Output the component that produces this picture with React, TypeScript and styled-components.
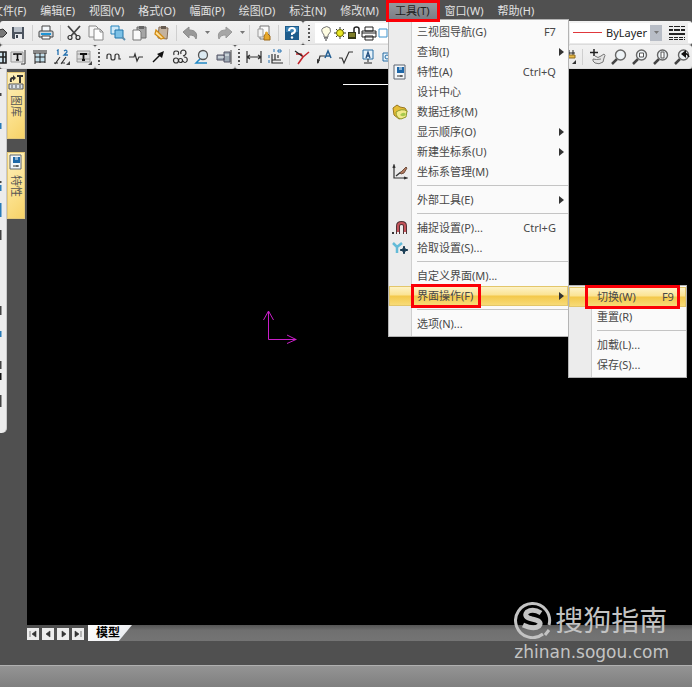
import React from "react";
import styled, { createGlobalStyle, css } from "styled-components";

const GlobalStyle = createGlobalStyle`
  * { box-sizing: border-box; }
  body { margin: 0; background: #505050; }
  button, select, a { font: inherit; color: inherit; }
  ul { list-style: none; margin: 0; padding: 0; }
`;

const Shell = styled.div`
  position: relative;
  display: flex;
  flex-direction: column;
  min-height: 100vh;
  overflow: hidden;
  background: #505050;
  color: #444;
  font: 11px/20px "Noto Sans", "Noto Sans CJK SC", sans-serif;
`;

const MenuBar = styled.nav`
  position: relative;
  z-index: 2;
  display: flex;
  height: 21px;
  margin-left: -15px;
  color: #e2e2e2;
  background: #505050;
`;

const redFrame = css`
  &::after {
    content: "";
    position: absolute;
    inset: -2px 0;
    border: 3px solid #fb0007;
    pointer-events: none;
    z-index: 5;
  }
`;

const MenuAnchor = styled.div<{ $marked?: boolean }>`
  position: relative;
  flex: none;
  ${(p) => p.$marked && redFrame}
  &::after { inset: 0 -2px -1px 0; }
`;

const MenuTitle = styled.button<{ $open?: boolean }>`
  height: 21px;
  padding: 0 7px;
  border: 0;
  white-space: nowrap;
  line-height: 20px;
  background: ${(p) => (p.$open ? "linear-gradient(#9b9da1, #777b83)" : "none")};
  color: ${(p) => (p.$open ? "#202020" : "inherit")};
  ${(p) => p.$open && "padding: 0 8px 0 9px;"}
`;

const gutter = css`
  background: linear-gradient(to right, #ececec 22px, #cfcfcf 22px, #cfcfcf 23px, #fafafa 23px);
`;

const Popup = styled.ul<{ $sub?: boolean }>`
  position: absolute;
  top: ${(p) => (p.$sub ? "-1px" : "19px")};
  left: ${(p) => (p.$sub ? "100%" : "2px")};
  width: ${(p) => (p.$sub ? "119px" : "181px")};
  padding: ${(p) => (p.$sub ? "1px 0 2px" : "2px 0")};
  border: 1px solid #b4b4b4;
  color: #484848;
  z-index: 3;
  ${gutter}
`;

const PopupItem = styled.li<{ $active?: boolean }>`
  position: relative;
  height: 20px;
  ${(p) =>
    p.$active &&
    css`
      background: linear-gradient(#fdf4cd, #fbe392 45%, #f3c84a 50%, #f8dd7c);
      box-shadow: inset 0 0 0 1px #e3c66a;
    `}
`;

const PopupButton = styled.button`
  display: grid;
  grid-template-columns: 22px 1fr auto 12px;
  align-items: center;
  width: 100%;
  height: 20px;
  padding: 0;
  border: 0;
  background: none;
  text-align: left;
  white-space: nowrap;
  line-height: 20px;
  svg { justify-self: center; }
`;

const PopupLabel = styled.span<{ $marked?: boolean }>`
  position: relative;
  justify-self: start;
  padding-left: 6px;
  padding-right: 8px;
  ${(p) => p.$marked && redFrame}
`;

const SubMarked = styled.span`
  position: relative;
  grid-column: 2 / 4;
  display: flex;
  justify-content: space-between;
  margin-left: -6px;
  margin-right: -6px;
  padding: 0 6px 0 12px;
  ${redFrame}
`;

const PopupRule = styled.li`
  height: 8px;
  margin-left: 28px;
  background: linear-gradient(transparent 3px, #c4c4c4 3px, #c4c4c4 4px, transparent 4px);
`;

const ToolRow = styled.div`
  display: flex;
  height: 24px;
`;

const ToolGroup = styled.div<{ $grow?: boolean }>`
  display: flex;
  align-items: center;
  flex: ${(p) => (p.$grow ? "1" : "none")};
  min-width: 0;
  border-radius: 3px;
  border-bottom: 1px solid #dcdcdc;
  background: linear-gradient(#f2f2f2, #e9e9e9);
`;

const ToolButton = styled.button<{ $w?: number }>`
  display: flex;
  justify-content: ${(p) => (p.$w && p.$w < 16 ? "flex-end" : "center")};
  flex: none;
  width: ${(p) => p.$w ?? 22}px;
  padding: 0;
  border: 0;
  background: none;
  overflow: hidden;
  svg { flex: none; }
`;

const Divider = styled.span<{ $w?: number }>`
  flex: none;
  width: ${(p) => p.$w ?? 6}px;
  height: 16px;
  background: linear-gradient(#cfcfcf, #cfcfcf) center / 1px 100% no-repeat;
`;

const Gap = styled.span`
  flex: none;
  width: 4px;
`;

const Grip = styled.span<{ $w?: number }>`
  flex: none;
  width: ${(p) => p.$w ?? 8}px;
  height: 16px;
  background: radial-gradient(#555 1px, transparent 1px) center / 4px 4px repeat-y;
`;

const LayerField = styled.button`
  display: flex;
  align-items: center;
  flex: 1;
  height: 20px;
  padding: 0 4px;
  gap: 1px;
  border: 0;
  background: #fff;
  color: #222;
  overflow: hidden;
  white-space: nowrap;
  svg { flex: none; }
`;

const LineField = styled.label`
  display: flex;
  align-items: center;
  gap: 4px;
  width: 80px;
  height: 20px;
  padding-left: 3px;
  margin-left: 4px;
  background: #fff;
  color: #222;
  svg { flex: none; }
`;

const LineSelect = styled.select`
  appearance: none;
  width: 44px;
  padding: 0;
  border: 0;
  background: none;
  line-height: 18px;
`;

const DropCap = styled.span`
  display: grid;
  place-items: center;
  width: 12px;
  height: 16px;
  margin-right: 5px;
  background: #b8bdc6;
`;

const FieldEdge = styled.span`
  width: 4px;
  height: 20px;
  margin-left: 2px;
  background: #fff;
`;

const Workspace = styled.main`
  display: flex;
  flex: 1;
`;

const EdgeBar = styled.div`
  flex: none;
  width: 7px;
  height: 364px;
  border-radius: 0 0 5px 0;
  border-right: 1px solid #c9c9c9;
  background: #ececec;
`;

const Dock = styled.div`
  display: flex;
  flex-direction: column;
  flex: none;
  gap: 13px;
  width: 20px;
  padding-top: 3px;
  padding-right: 2px;
`;

const DockTab = styled.button`
  display: flex;
  flex-direction: column;
  align-items: center;
  gap: 5px;
  height: 67px;
  padding: 1px 0;
  border: 1px solid #e4c877;
  background: linear-gradient(135deg, #fdf0bd, #fbe08a 60%, #f7d268);
  span {
    writing-mode: vertical-rl;
    text-orientation: sideways;
    line-height: 16px;
    color: #555;
  }
`;

const Canvas = styled.svg`
  flex: 1;
  min-width: 0;
  display: block;
  background: #000;
`;

const SheetBar = styled.div`
  display: flex;
  align-items: center;
  height: 16px;
  padding-left: 27px;
`;

const SheetStep = styled.button`
  display: grid;
  place-items: center;
  width: 12px;
  height: 12px;
  margin-right: 3px;
  margin-top: 2px;
  padding: 0;
  border: 0;
  background: #ededed;
`;

const SheetTrack = styled.div`
  flex: 1;
  display: flex;
  margin-left: 1px;
  background: linear-gradient(#555, #707070 35%, #747474);
`;

const SheetTab = styled.button`
  width: 44px;
  height: 16px;
  padding: 0 0 0 8px;
  border: 0;
  clip-path: polygon(0 0, 100% 0, 70% 100%, 0 100%);
  background: linear-gradient(135deg, #fff, #e6e8ec);
  color: #000;
  font-size: 12px;
  font-weight: 700;
  line-height: 16px;
  text-align: left;
  white-space: nowrap;
`;

const StatusBar = styled.footer`
  height: 22px;
  margin-top: 24px;
  border-top: 1px solid #b0b0b0;
  background: linear-gradient(#949494, #7f7f7f);
`;

const Watermark = styled.a`
  position: absolute;
  right: 23px;
  bottom: 24px;
  display: grid;
  grid-template-columns: 38px auto;
  column-gap: 3px;
  align-items: center;
  color: #c3c3c3;
  text-decoration: none;
`;

const WatermarkName = styled.span`
  font-size: 28px;
  line-height: 38px;
  font-weight: 400;
`;

const WatermarkHost = styled.span`
  grid-column: 1 / 3;
  padding-top: 2px;
  font: 17px/22px "DejaVu Sans", sans-serif;
`;

type Art = Record<string, React.ReactNode>;

const ink = { fill: "none", stroke: "#333", strokeWidth: 1.2 } as const;

const art: Art = {
  open: <path d="M8 5l4-1 4 4-4 4H8z" fill="#777" stroke="#333" />,
  save: (
    <>
      <path d="M2 2h12v12H3l-1-1z" fill="#4c545f" />
      <path d="M4 2h8v5H4z" fill="#b9c0c9" />
      <path d="M5 9h7v5H5z" fill="#e9ebee" />
      <path d="M6 10h2v3H6z" fill="#3a424d" />
    </>
  ),
  print: (
    <>
      <path d="M4 1h8v6H4z" fill="#f4f8fb" stroke="#444" />
      <path d="M1 7q0-1 1-1h12q1 0 1 1v5H1z" fill="#cfd8df" stroke="#444" />
      <path d="M3 8h10v2H3z" fill="#1f94d4" />
      <path d="M4 11h8v3H4z" fill="#fff" stroke="#444" />
    </>
  ),
  cut: (
    <>
      <path d="M2 1l9 10M14 1L5 11" stroke="#444" strokeWidth="1.8" />
      <circle cx="4" cy="12.5" r="2" {...ink} />
      <circle cx="12" cy="12.5" r="2" {...ink} />
    </>
  ),
  copy: (
    <>
      <path d="M1 1h7l2 2v9H1z" fill="#f7f7f7" stroke="#888" />
      <path d="M6 4h6l3 3v8H6z" fill="#fdfdfd" stroke="#888" />
      <path d="M12 4v3h3" fill="none" stroke="#888" />
    </>
  ),
  copyBase: (
    <>
      <path d="M1 1h8v8H1z" fill="#cfe9f8" stroke="#2584bd" />
      <path d="M5 5h8v8H5z" fill="#7cc1e6" stroke="#1f75aa" />
      <path d="M12 12l3 3" stroke="#5e8fae" strokeWidth="2" />
    </>
  ),
  paste: (
    <>
      <path d="M5 2h9v11H5z" fill="#a5a5a5" stroke="#6c6c6c" />
      <path d="M7 1h5v3H7z" fill="#666" />
      <path d="M1 5h6l2 2v8H1z" fill="#fafafa" stroke="#777" />
    </>
  ),
  pasteBrush: (
    <>
      <path d="M5 2l9 1-1 11-9-1z" fill="#c3b29f" stroke="#806a58" />
      <path d="M7 1h5v3H7z" fill="#665b50" />
      <path d="M2 5l8 8-3 1-6-5z" fill="#ffe19a" stroke="#d18b14" strokeWidth="1.3" />
    </>
  ),
  undo: <path d="M1 7l6-5v3c6 0 9 3 7 9-1-3-3-4-7-4v3z" fill="#999" stroke="#8c8c8c" />,
  redo: <path d="M15 7L9 2v3C3 5 0 8 2 14c1-3 3-4 7-4v3z" fill="#a6a6a6" stroke="#999" />,
  page: (
    <>
      <path d="M4 1h9v13H4z" fill="#fafafa" stroke="#777" />
      <path d="M2 4h5v8H2z" fill="#f3f3f3" stroke="#999" />
      <path d="M8 15v-4l2-3h1l3 3v4z" fill="#e6a72b" stroke="#9c681b" />
      <circle cx="10.500" cy="8" r="1.5" fill="#e6a72b" />
    </>
  ),
  help: (
    <>
      <path d="M1 1h14v14H1z" fill="#1d5c8c" />
      <path d="M2 2h12v5H2z" fill="#3c83b5" />
      <path d="M5 6q0-3 3-3t3 2.500-3 3V10" fill="none" stroke="#fff" strokeWidth="2" />
      <circle cx="8" cy="12.5" r="1.2" fill="#fff" />
    </>
  ),
  bulb: (
    <>
      <path d="M5 10Q1 5 4 3q4-3 7 0 2 4-2 7v2H5z" fill="#fffde2" stroke="#777" />
      <path d="M5 13h4M6 15h2" stroke="#333" />
    </>
  ),
  sun: (
    <>
      <path d="M6 2v12M0 8h12M2 4l8 8M10 4l-8 8" stroke="#333" />
      <circle cx="6" cy="8" r="3.5" fill="#e9e623" stroke="#6b6b00" />
    </>
  ),
  lock: (
    <>
      <path d="M0 7h8v7H0z" fill="#333614" />
      <path d="M1 9h6M1 11h6" stroke="#c8c43a" />
      <path d="M6 7V4q0-2 2.500-2T11 4v5" fill="none" stroke="#222" strokeWidth="1.5" />
    </>
  ),
  plot: (
    <>
      <path d="M4 2h8v4H4zM1 6h14v6H1zM4 11h8v4H4z" fill="#fafafa" stroke="#222" />
      <path d="M1 8h14" stroke="#222" />
    </>
  ),
  swatch: <path d="M1 4h8v8H1z" fill="#fff" stroke="#3c94cf" />,
  frag: <path d="M6 3h9v11H6zM6 8h9M12 3v11" fill="#cfe4ee" stroke="#222" strokeWidth="1.6" />,
  textFrame: (
    <>
      <path d="M1 3h12v10H1z" fill="#e2e2e2" stroke="#999" />
      <path d="M4 6V5h7v1M7.500 5v6M6 11h3" stroke="#111" strokeWidth="1.6" fill="none" />
      <path d="M15 1v14h-4" stroke="#333" fill="none" />
    </>
  ),
  table: (
    <>
      <path d="M4 5h9v8H4z" fill="#c3dfeb" />
      <path d="M1 2h14M1 4h14M3 4v11M8 4v10M13 4v10M3 8h10M3 13h10" stroke="#222" fill="none" />
    </>
  ),
  ordinal: (
    <>
      <path d="M3 2l1-1v5M10 2q3-2 3 1l-3 3h4" fill="none" stroke="#2471b0" strokeWidth="1.3" />
      <path d="M1 15l5-7M7 15l5-7M0 14h4M7 14h4" {...ink} />
      <path d="M16 12v4h-4z" fill="#444" />
    </>
  ),
  textGrid: (
    <>
      <path d="M1 2h13v11H1zM1 5h13M1 10h13" fill="#ddd" stroke="#999" />
      <path d="M4 5h7M7.500 5v6M6 11h3" stroke="#111" strokeWidth="1.8" />
      <path d="M16 12v4h-4z" fill="#444" />
    </>
  ),
  wave: <path d="M1 10V7q0-2 2-2t2 2v2q0 2 2 2t2-2V7q0-2 2-2t2 2v3h2" {...ink} />,
  zigzag: <path d="M1 8h5l1-3 2 7 2-4h4" {...ink} />,
  arrow: (
    <>
      <path d="M3 13l7-7" stroke="#111" strokeWidth="1.4" />
      <path d="M14 2L12 9 7 5z" fill="#111" />
    </>
  ),
  cloud: (
    <>
      <path d="M2 6q-1-4 2-4 4 0 2 4M9 5q-1-3 2-4 3 0 3 3 0 2-3 3" {...ink} />
      <path d="M12 8q4 0 3 4-2 3-4 0" {...ink} />
      <circle cx="4" cy="11.5" r="2.500" {...ink} />
      <circle cx="8.500" cy="11.5" r="2" {...ink} />
    </>
  ),
  lens: (
    <>
      <circle cx="9" cy="6" r="4.5" fill="#dceaf2" stroke="#555" strokeWidth="1.3" />
      <path d="M6 10l-4 4h11" fill="none" stroke="#2389c5" strokeWidth="1.5" />
    </>
  ),
  screw: (
    <>
      <path d="M8 3h6v10H8zM1 6h7v5H1z" fill="#9eaab5" stroke="#556" />
      <path d="M9 6h4M2 8h6" stroke="#f6f9fb" />
      <path d="M15 1v14" stroke="#444" />
    </>
  ),
  dim: <path d="M1 2v12M15 2v12M1 8h14M4 6L1 8l3 2M12 6l3 2-3 2" {...ink} />,
  ordinate: (
    <>
      <path d="M4 5v9h11M7 5v6h6M10 6v3M4 11h3" {...ink} />
      <path d="M6 0v3M10 1h3v2h-3zM1 6v3M1 11v3" fill="none" stroke="#2471b0" />
    </>
  ),
  chamfer: (
    <>
      <path d="M2 5h5l2 3-5 7M9 8l6-5" fill="none" stroke="#c3262c" strokeWidth="1.6" />
      <path d="M1 2l7 5" stroke="#222" strokeWidth="1.2" />
    </>
  ),
  leader: (
    <>
      <path d="M2 14l2-7h5" {...ink} />
      <path d="M1 15v-5l3 1z" fill="#333" />
      <path d="M9 9l3-7 3 7M10 7h4" fill="none" stroke="#245e92" strokeWidth="1.5" />
    </>
  ),
  rough: <path d="M1 9h3l2 5 5-11h4" {...ink} />,
  datum: (
    <>
      <path d="M3 1h10v9H3z" fill="#e6f2fa" stroke="#276da3" />
      <path d="M6 9l2-6 2 6M6 7h4" fill="none" stroke="#234f80" strokeWidth="1.3" />
      <path d="M8 10v3M4 14h8" stroke="#222" />
    </>
  ),
  tolerance: (
    <>
      <path d="M1 4h14v8H1z" fill="#e6f2fa" stroke="#276da3" />
      <circle cx="5" cy="8" r="2" fill="none" stroke="#276da3" />
    </>
  ),
  edit: (
    <>
      <path d="M8 1v5M12 1v5M7 4h7" stroke="#222" />
      <path d="M7 6h7v3H7z" fill="#e8ba43" stroke="#8c6820" />
      <path d="M15 11v4h-4z" fill="#333" />
    </>
  ),
  pan: (
    <>
      <path d="M5 7q3 3 6 0l3-2q2 1 0 4l-1 4q-4 3-8 1-3-2-2-4 3 1 8 0" fill="#e3e3e3" stroke="#777" />
      <path d="M4 0v7M0 3.500h8" stroke="#222" strokeWidth="1.5" />
    </>
  ),
  zoom: magnifier(),
  zoomWindow: magnifier(<path d="M7.500 4h4v4h-4z" fill="#fff" stroke="#555" />),
  zoomPage: magnifier(<path d="M8 3h3v6H8z" fill="#fff" stroke="#555" />),
  zoomBack: magnifier(
    <>
      <path d="M10 6q3-3 5 2" fill="none" stroke="#111" strokeWidth="1.5" />
      <path d="M12 1v8L7 5z" fill="#111" />
    </>,
  ),
  props: (
    <>
      <path d="M2 1h11v14H2z" fill="#f3f6f9" stroke="#5c6570" />
      <path d="M5 3h7v6H5z" fill="#1e67a8" />
      <path d="M7 3h3v3H7z" fill="#8bb2d2" />
      <path d="M5 12h6M9 11v2" stroke="#333" />
    </>
  ),
  migrate: (
    <>
      <path d="M1 4l4-3 3 2 5 1 2 3-2 6-6 2-5-4z" fill="#e6bd36" stroke="#97761f" />
      <path d="M4 8q6-4 11-1l-1 6-5 2q-5-1-5-7z" fill="#f2ea8a" stroke="#8f9a2c" />
      <path d="M8 11q3-4 6-1-2 4-6 1z" fill="#a6c94d" />
    </>
  ),
  ucs: (
    <>
      <path d="M2 2v12h13M1 4l1-3 1 3M12 13l3 1-3 1" {...ink} />
      <path d="M4 12l5-4" stroke="#333" strokeWidth="1.4" />
      <path d="M8 9l6-6 1 1-3 5-3 1z" fill="#b0785d" stroke="#71503f" />
    </>
  ),
  magnet: (
    <>
      <path d="M6 14V6q0-3 3.500-3T13 6v8" fill="none" stroke="#513235" strokeWidth="4" />
      <path d="M6 12V6q0-3 3.500-3T13 6v6" fill="none" stroke="#c4545b" strokeWidth="2" />
      <path d="M5 12h2v2H5zM12 12h2v2h-2z" fill="#eee" />
      <path d="M0 12h2v2H0z" fill="#333" />
    </>
  ),
  pick: (
    <>
      <path d="M1 3l4 4 5-4M5 7v6" fill="none" stroke="#63bbd8" strokeWidth="2.500" />
      <path d="M12 6l1 3 3 1-3 1-1 3-1-3-3-1 3-1z" fill="#173a52" stroke="#173a52" />
    </>
  ),
  library: (
    <>
      <path d="M2 8q-1-5 3-5V1l3 3-3 3V5Q3 5 4 8zM9 1h6v2h-2v6h-2V3H9z" fill="#333" />
      <path d="M1 10h14v5H1z" fill="#dce4ea" stroke="#555" />
      <path d="M4 11v3M8 11v3M12 11v3" stroke="#555" />
    </>
  ),
};

function magnifier(inside?: React.ReactNode) {
  return (
    <>
      <path d="M6 10l-5 5" stroke="#444" strokeWidth="2.5" />
      <circle cx="9.500" cy="6" r="5" fill="#eef3f6" stroke="#666" strokeWidth="1.4" />
      {inside}
    </>
  );
}

const Icon = ({ name, w = 16, size = 16 }: { name: string; w?: number; size?: number }) => (
  <svg width={w} height={size} viewBox={`0 0 ${w} 16`} aria-hidden="true">
    {art[name]}
  </svg>
);

const Caret = () => (
  <svg width="5" height="3" viewBox="0 0 5 3" aria-hidden="true">
    <path d="M0 0h5L2.500 3z" fill="#777" />
  </svg>
);

const Tools = ({ names, width }: { names: string[]; width?: number }) => (
  <>
    {names.map((n) => (
      <ToolButton key={n} $w={width} aria-label={n}>
        <Icon name={n} />
      </ToolButton>
    ))}
  </>
);

const SplitCaret = ({ label }: { label: string }) => (
  <ToolButton $w={9} aria-label={label}>
    <Caret />
  </ToolButton>
);

const SubArrow = () => (
  <svg width="5" height="8" viewBox="0 0 5 8" aria-hidden="true">
    <path d="M0 0l5 4-5 4z" fill="#333" />
  </svg>
);

interface Entry {
  label: string;
  icon?: string;
  keys?: string;
  more?: boolean;
}

const toolMenu: Entry[][] = [
  [
    { label: "三视图导航(G)", keys: "F7" },
    { label: "查询(I)", more: true },
    { label: "特性(A)", icon: "props", keys: "Ctrl+Q" },
    { label: "设计中心" },
    { label: "数据迁移(M)", icon: "migrate" },
    { label: "显示顺序(O)", more: true },
    { label: "新建坐标系(U)", more: true },
    { label: "坐标系管理(M)", icon: "ucs" },
  ],
  [{ label: "外部工具(E)", more: true }],
  [
    { label: "捕捉设置(P)...", icon: "magnet", keys: "Ctrl+G" },
    { label: "拾取设置(S)...", icon: "pick" },
  ],
  [{ label: "自定义界面(M)..." }, { label: "界面操作(F)", more: true }],
  [{ label: "选项(N)..." }],
];

const SwitchMenu = () => (
  <Popup $sub>
    <PopupItem $active>
      <PopupButton>
        <span />
        <SubMarked>
          <span>切换(W)</span>
          <span>F9</span>
        </SubMarked>
      </PopupButton>
    </PopupItem>
    <PopupItem>
      <PopupButton>
        <span />
        <PopupLabel>重置(R)</PopupLabel>
      </PopupButton>
    </PopupItem>
    <PopupRule />
    {["加载(L)...", "保存(S)..."].map((t) => (
      <PopupItem key={t}>
        <PopupButton>
          <span />
          <PopupLabel>{t}</PopupLabel>
        </PopupButton>
      </PopupItem>
    ))}
  </Popup>
);

const ToolMenu = () => (
  <Popup>
    {toolMenu.map((group, g) => (
      <React.Fragment key={g}>
        {g > 0 && <PopupRule />}
        {group.map((e) => {
          const open = e.label === "界面操作(F)";
          return (
            <PopupItem key={e.label} $active={open}>
              <PopupButton>
                {e.icon ? <Icon name={e.icon} /> : <span />}
                <PopupLabel $marked={open}>{e.label}</PopupLabel>
                <span>{e.keys}</span>
                {e.more ? <SubArrow /> : <span />}
              </PopupButton>
              {open && <SwitchMenu />}
            </PopupItem>
          );
        })}
      </React.Fragment>
    ))}
  </Popup>
);

const titles = [
  "文件(F)", "编辑(E)", "视图(V)", "格式(O)", "幅面(P)", "绘图(D)",
  "标注(N)", "修改(M)", "工具(T)", "窗口(W)", "帮助(H)",
];

const steps = [
  { label: "第一页", d: "M2 2v6M8 2v6L4 5z" },
  { label: "上一页", d: "M7 2v6L3 5z" },
  { label: "下一页", d: "M4 2v6l4-3z" },
  { label: "最后一页", d: "M8 2v6M2 2v6l4-3z" },
];

export default function App() {
  return (
    <Shell>
      <GlobalStyle />
      <MenuBar>
        {titles.map((t) => {
          const open = t === "工具(T)";
          return (
            <MenuAnchor key={t} $marked={open}>
              <MenuTitle $open={open}>{t}</MenuTitle>
              {open && <ToolMenu />}
            </MenuAnchor>
          );
        })}
      </MenuBar>

      <ToolRow>
        <ToolGroup>
          <ToolButton $w={7} aria-label="open"><Icon name="open" /></ToolButton>
          <Tools names={["save"]} />
          <Divider />
          <Tools names={["print"]} />
          <Divider />
          <Tools names={["cut", "copy", "copyBase", "paste", "pasteBrush"]} />
          <Divider />
          <Tools names={["undo"]} />
          <SplitCaret label="undo list" />
          <Gap />
          <Tools names={["redo"]} />
          <SplitCaret label="redo list" />
          <Divider $w={8} />
          <Tools names={["page"]} />
          <Divider />
          <Tools names={["help"]} />
        </ToolGroup>
        <ToolGroup $grow>
          <Grip $w={12} />
          <LayerField aria-label="图层">
            <Icon name="bulb" w={14} />
            <Icon name="sun" w={13} />
            <Icon name="lock" w={12} />
            <Icon name="plot" />
            <Icon name="swatch" w={10} />
            粗
          </LayerField>
          <LineField>
            <svg width="29" height="2" viewBox="0 0 29 2" aria-hidden="true">
              <path d="M0 0h29v1H0z" fill="#e0383c" />
            </svg>
            <LineSelect aria-label="线型" defaultValue="ByLayer">
              <option>ByLayer</option>
            </LineSelect>
          </LineField>
          <DropCap><Caret /></DropCap>
          <ToolButton $w={19} aria-label="线宽">
            <svg width="18" height="16" viewBox="0 0 18 16" aria-hidden="true">
              <path d="M1 1h16v1H1zM1 4h16v2H1zM1 8h16v2H1z" fill="#222" />
              <path d="M1 12.500h16M1 14.500h16" stroke="#222" strokeDasharray="4 1" />
              <path d="M5 1h1v5H5zM12 1h1v5h-1z" fill="#eee" />
            </svg>
          </ToolButton>
          <FieldEdge />
        </ToolGroup>
      </ToolRow>

      <ToolRow>
        <ToolGroup>
          <ToolButton $w={7} aria-label="frame"><Icon name="frag" /></ToolButton>
          <Tools names={["textFrame", "table", "ordinal", "textGrid"]} />
        </ToolGroup>
        <ToolGroup>
          <Grip />
          <Tools names={["wave", "zigzag", "arrow", "cloud", "lens", "screw"]} />
        </ToolGroup>
        <ToolGroup $grow>
          <Grip />
          <Tools names={["dim", "ordinate"]} />
          <Divider $w={4} />
          <Tools names={["chamfer", "leader", "rough", "datum", "tolerance"]} />
        </ToolGroup>
        <ToolGroup>
          <ToolButton $w={10} aria-label="edit"><Icon name="edit" /></ToolButton>
          <Divider $w={10} />
          <Tools names={["pan", "zoom", "zoomWindow", "zoomPage", "zoomBack"]} width={21} />
        </ToolGroup>
      </ToolRow>

      <Workspace>
        <EdgeBar>
          <svg width="6" height="350" viewBox="0 0 6 350" aria-hidden="true">
            <path d="M0 24v3M0 112v2M0 161v10M0 237v9M0 292v8M0 326v12" stroke="#444" strokeWidth="3" />
            <path d="M0 54v6M0 116v6M0 134v14M0 262v6" stroke="#277bb8" strokeWidth="3" />
            <path d="M0 304v7" stroke="#111" strokeWidth="3" />
          </svg>
        </EdgeBar>
        <Dock>
          <DockTab><Icon name="library" /><span>图库</span></DockTab>
          <DockTab><Icon name="props" /><span>特性</span></DockTab>
        </Dock>
        <Canvas height="556" role="img" aria-label="绘图区">
          <path d="M316 15.500h70" stroke="#fff" />
          <path d="M241.500 270.500v-28M236.500 251l5-9 5 9M241.500 270.500h28M260 266l9 4.500-9 4" fill="none" stroke="#c81ec8" />
        </Canvas>
      </Workspace>

      <SheetBar>
        {steps.map((s) => (
          <SheetStep key={s.label} aria-label={s.label}>
            <svg width="10" height="10" viewBox="0 0 10 10" aria-hidden="true">
              <path d={s.d} fill="#333" stroke="#333" strokeWidth="0.6" />
            </svg>
          </SheetStep>
        ))}
        <SheetTrack>
          <SheetTab>模型</SheetTab>
        </SheetTrack>
      </SheetBar>
      <StatusBar />

      <Watermark href="#zhinan">
        <svg width="38" height="38" viewBox="0 0 38 38" aria-hidden="true">
          <path d="M29 33A17 17 0 1 1 35 24M31 34l4-5" fill="none" stroke="#c3c3c3" strokeWidth="3" />
          <path d="M27 12Q19 7 13 11q-4 5 5 7 11 2 7 7-5 4-16-1" fill="none" stroke="#c3c3c3" strokeWidth="5" />
        </svg>
        <WatermarkName>搜狗指南</WatermarkName>
        <WatermarkHost>zhinan.sogou.com</WatermarkHost>
      </Watermark>
    </Shell>
  );
}
